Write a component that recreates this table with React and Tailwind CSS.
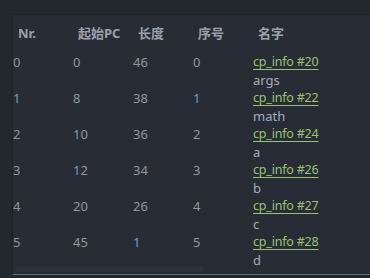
import React from 'react';

const rows = [
  { nr: 0, pc: 0, len: 46, idx: 0, ref: 'cp_info #20', name: 'args' },
  { nr: 1, pc: 8, len: 38, idx: 1, ref: 'cp_info #22', name: 'math' },
  { nr: 2, pc: 10, len: 36, idx: 2, ref: 'cp_info #24', name: 'a' },
  { nr: 3, pc: 12, len: 34, idx: 3, ref: 'cp_info #26', name: 'b' },
  { nr: 4, pc: 20, len: 26, idx: 4, ref: 'cp_info #27', name: 'c' },
  { nr: 5, pc: 45, len: 1, idx: 5, ref: 'cp_info #28', name: 'd' },
];

const headers = ['Nr.', '起始PC', '长度', '序号', '名字'];

export default function App() {
  return (
    <div
      className="w-[370px] h-[278px] bg-[#23272e] pt-[14px] pl-[12px] overflow-hidden"
      style={{ fontFamily: '"Noto Sans", "Noto Sans CJK SC", sans-serif' }}
    >
      <div className="relative h-[261px] border-t border-l border-b border-t-[#1e2127] border-l-[#1e2127] border-b-[#6a6e75] bg-[#282c34] overflow-hidden">
        {/* header */}
        <div className="grid grid-cols-[60px_60px_60px_60px_1fr] h-[38px] pt-[9px] text-[13px] leading-[18px] font-bold text-[#9ba2ae]">
          {headers.map((h) => (
            <div key={h} className="pl-[5px]">{h}</div>
          ))}
        </div>

        {/* rows */}
        {rows.map((r) => (
          <div key={r.nr} className="grid grid-cols-[60px_60px_60px_60px_1fr] text-[13px] leading-[18px] text-[#8e97a6]">
            <div>{r.nr}</div>
            <div>{r.pc}</div>
            <div>{r.len}</div>
            <div>{r.idx}</div>
            <div className="flex flex-col items-start">
              <span className="text-[#98c379] text-[12.5px] tracking-[-0.2px] underline underline-offset-[3px]">{r.ref}</span>
              <span className="text-[#a5acb8]">{r.name}</span>
            </div>
          </div>
        ))}

        {/* horizontal scrollbar thumb */}
        <div className="absolute left-[2px] bottom-[2px] w-[189px] h-[6px] rounded-full bg-[#2e323a]" />
      </div>
    </div>
  );
}
